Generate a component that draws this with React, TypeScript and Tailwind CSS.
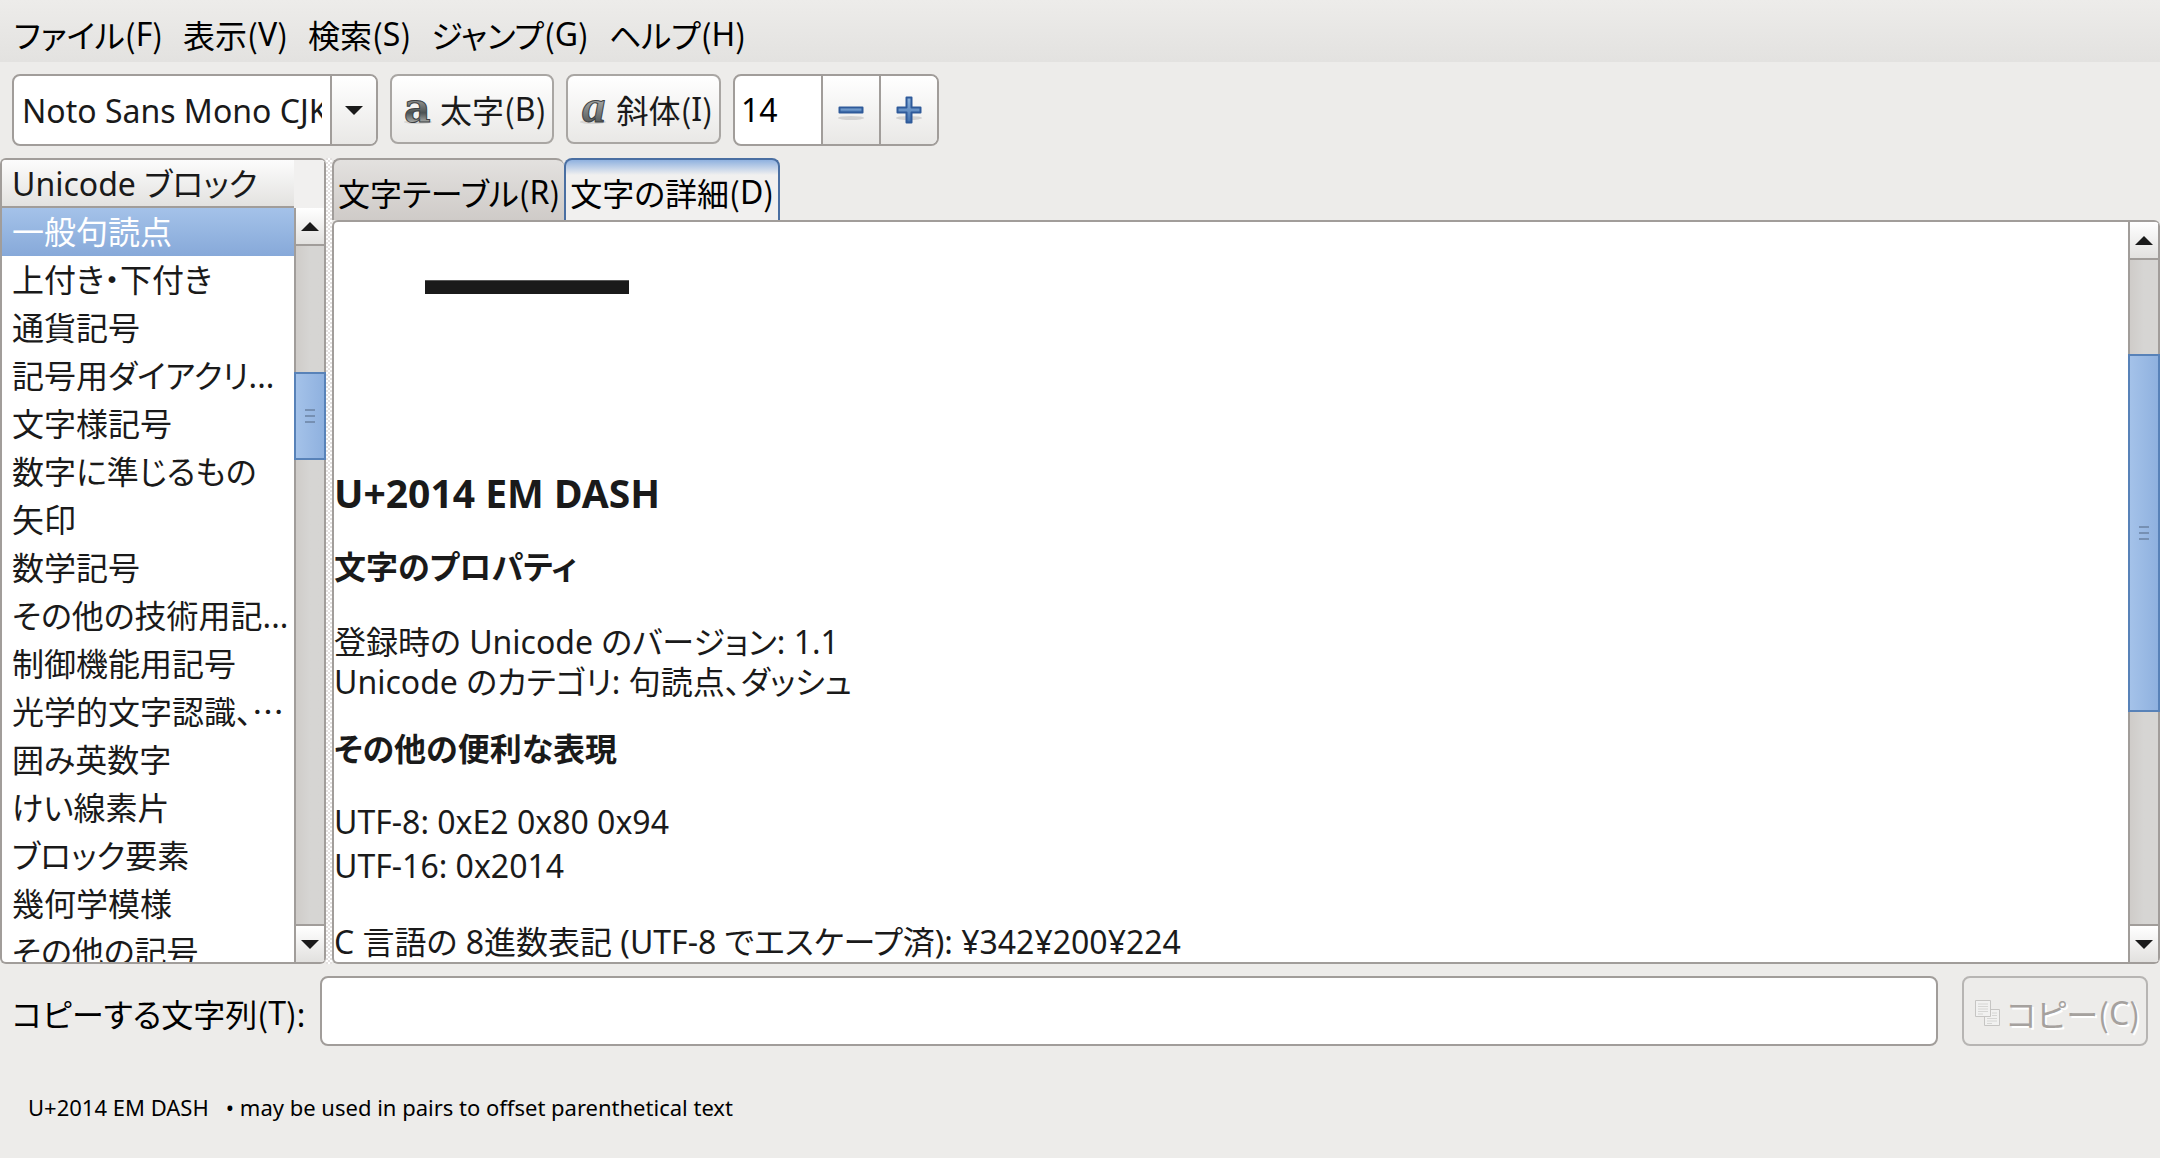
import React, { ReactNode, useState } from 'react';

const menus = [
  { label: 'ファイル', mnemonic: 'F' },
  { label: '表示', mnemonic: 'V' },
  { label: '検索', mnemonic: 'S' },
  { label: 'ジャンプ', mnemonic: 'G' },
  { label: 'ヘルプ', mnemonic: 'H' },
];

const blocks = [
  '一般句読点',
  '上付き・下付き',
  '通貨記号',
  '記号用ダイアクリ...',
  '文字様記号',
  '数字に準じるもの',
  '矢印',
  '数学記号',
  'その他の技術用記...',
  '制御機能用記号',
  '光学的文字認識、⋯',
  '囲み英数字',
  'けい線素片',
  'ブロック要素',
  '幾何学模様',
  'その他の記号',
];

interface LabelProps {
  label: string;
  mnemonic: string;
}

// Label with its access key, e.g. ファイル(F)
const Label: React.FC<LabelProps> = ({ label, mnemonic }) => (
  <span className="whitespace-nowrap [font-family:'Noto_Sans_CJK_JP',sans-serif]">
    {label}(<span className="align-[2px] leading-none [font-family:'Noto_Sans',sans-serif]">{mnemonic}</span>)
  </span>
);

const Arrow: React.FC<{ up?: boolean }> = ({ up }) => (
  <svg width="18" height="9" viewBox="0 0 18 9" aria-hidden="true">
    <path d={up ? 'M0 9 9 0l9 9z' : 'M0 0h18L9 9z'} fill="#1a1a1a" />
  </svg>
);

interface ScrollbarProps {
  before: number;
  size: number;
  after: number;
}

const Scrollbar: React.FC<ScrollbarProps> = ({ before, size, after }) => {
  const track = 'border-x-2 border-[#a19d9a] bg-linear-to-r from-[#cfccc9] to-[#d6d5d3] to-50%';
  return (
    <div className="flex w-8 shrink-0 flex-col">
      <button aria-label="上へ" className="flex h-[38px] shrink-0 items-center justify-center border-x-2 border-b-2 border-[#a19d9a] bg-linear-to-b from-white to-[#e2e1df]">
        <Arrow up />
      </button>
      <div className={`basis-0 ${track}`} style={{ flexGrow: before }} />
      <div
        className="flex basis-0 flex-col items-center justify-center gap-1 border-2 border-[#5882b8] bg-linear-to-r from-[#a4c2e9] to-[#8fb1df]"
        style={{ flexGrow: size }}
      >
        <span className="h-0.5 w-2.5 bg-[#7690b3]" />
        <span className="h-0.5 w-2.5 bg-[#7690b3]" />
        <span className="h-0.5 w-2.5 bg-[#7690b3]" />
      </div>
      <div className={`basis-0 ${track}`} style={{ flexGrow: after }} />
      <button aria-label="下へ" className="flex h-[38px] shrink-0 items-center justify-center border-x-2 border-t-2 border-[#a19d9a] bg-linear-to-b from-white to-[#e2e1df]">
        <Arrow />
      </button>
    </div>
  );
};

const BoldIcon = () => (
  <svg width="28" height="30" viewBox="0 0 28 30" className="overflow-visible" aria-hidden="true">
    <defs>
      <linearGradient id="bold-fill" x1="0" y1="0" x2="0" y2="1">
        <stop offset="0.3" stopColor="#9a9c9a" />
        <stop offset="0.6" stopColor="#4b5254" />
        <stop offset="0.8" stopColor="#a9aba9" />
      </linearGradient>
    </defs>
    <ellipse cx="14" cy="28" rx="14" ry="2" fill="#000" opacity="0.1" />
    <text x="0" y="28" fontFamily="DejaVu Serif" fontWeight="700" fontSize="41" fill="url(#bold-fill)" stroke="#3c4042" strokeWidth="1">a</text>
  </svg>
);

const ItalicIcon = () => (
  <svg width="28" height="30" viewBox="0 0 28 30" className="overflow-visible" aria-hidden="true">
    <defs>
      <linearGradient id="italic-fill" x1="0" y1="0" x2="0" y2="1">
        <stop offset="0.3" stopColor="#b4b6b4" />
        <stop offset="0.8" stopColor="#5a5e5e" />
      </linearGradient>
    </defs>
    <ellipse cx="13" cy="28" rx="13" ry="2" fill="#000" opacity="0.1" />
    <text x="2" y="28" fontFamily="Liberation Serif" fontStyle="italic" fontWeight="700" fontSize="47" fill="url(#italic-fill)" stroke="#3c4042" strokeWidth="1">a</text>
  </svg>
);

const StepIcon: React.FC<{ plus?: boolean }> = ({ plus }) => (
  <svg width="28" height="30" viewBox="0 0 28 30" aria-hidden="true">
    <defs>
      <linearGradient id="step-fill" x1="0" y1="0" x2="0" y2="1">
        <stop offset="0" stopColor="#8fb4dc" />
        <stop offset="1" stopColor="#3f6fae" />
      </linearGradient>
    </defs>
    <ellipse cx="14" cy="23" rx="13" ry="2" fill="#000" opacity="0.12" />
    <path
      d={plus ? 'M11.5 2.500h5v10h9v5h-9v10h-5v-10h-9v-5h9z' : 'M2.500 12.500h23v5h-23z'}
      fill="url(#step-fill)"
      stroke="#2f5a9a"
      strokeWidth="2"
      strokeLinejoin="round"
    />
  </svg>
);

const CopyIcon = () => (
  <svg width="26" height="28" viewBox="0 0 26 28" aria-hidden="true">
    <g fill="#f1f1f0" stroke="#c6c5c3">
      <path d="M10.500 10.500h15v16h-15z" />
      <path d="M1.500 1.500h15v16h-15z" />
    </g>
    <path d="M4 5h10M4 7.500h10M4 10h10M4 12.500h10M4 15h5M18 14h5M18 16.500h5M13 19.500h10M13 22h10M13 24.500h5" stroke="#d6d6d4" />
  </svg>
);

const ToolButton: React.FC<{ children: ReactNode }> = ({ children }) => (
  <button className="flex h-[70px] items-center gap-2 rounded-lg border-2 border-[#a9a6a3] bg-linear-to-b from-white to-[#e9e8e6] pr-1.5 pl-3 text-[#1a1a1a]">
    {children}
  </button>
);

export default function App() {
  const [font, setFont] = useState('Noto Sans Mono CJK JP');
  const [size, setSize] = useState(14);
  const [text, setText] = useState('');
  const [selected, setSelected] = useState(0);

  return (
    <div
      lang="ja"
      className="flex h-screen flex-col overflow-hidden bg-[#edecea] text-[32px] leading-[48px] text-black [font-family:'Noto_Sans','Noto_Sans_CJK_JP',sans-serif] [font-feature-settings:'palt']"
    >
      <nav className="flex h-[62px] shrink-0 items-center gap-5 bg-linear-to-b from-[#edecea] to-[#e3e2e0] px-3.5 pt-2">
        {menus.map((menu) => (
          <button key={menu.mnemonic}>
            <Label {...menu} />
          </button>
        ))}
      </nav>

      <div className="flex shrink-0 items-start gap-3 p-3">
        <div className="flex h-[72px] w-[366px] overflow-hidden rounded-lg border-2 border-[#a19d9a] bg-white">
          <div className="min-w-0 flex-1 px-2">
            <input
              aria-label="フォント"
              className="h-full w-full text-[#1a1a1a] outline-none"
              value={font}
              onChange={(e) => setFont(e.target.value)}
            />
          </div>
          <button aria-label="フォント一覧" className="flex w-[46px] items-center justify-center border-l-2 border-[#a19d9a] bg-linear-to-b from-white to-[#e9e8e6]">
            <Arrow />
          </button>
        </div>
        <ToolButton>
          <BoldIcon />
          <Label label="太字" mnemonic="B" />
        </ToolButton>
        <ToolButton>
          <ItalicIcon />
          <Label label="斜体" mnemonic="I" />
        </ToolButton>
        <div className="flex h-[72px] w-[206px] overflow-hidden rounded-lg border-2 border-[#a19d9a] bg-white">
          <input
            aria-label="サイズ"
            className="min-w-0 flex-1 px-1.5 outline-none"
            value={size}
            onChange={(e) => setSize(Number(e.target.value) || 0)}
          />
          <button aria-label="小さく" onClick={() => setSize(size - 1)} className="flex w-[58px] items-center justify-center border-l-2 border-[#a19d9a] bg-linear-to-b from-white to-[#e9e8e6]">
            <StepIcon />
          </button>
          <button aria-label="大きく" onClick={() => setSize(size + 1)} className="flex w-[58px] items-center justify-center border-l-2 border-[#a19d9a] bg-linear-to-b from-white to-[#e9e8e6]">
            <StepIcon plus />
          </button>
        </div>
      </div>

      <div className="flex min-h-0 flex-1 text-[#1a1a1a]">
        <aside className="flex w-[326px] shrink-0 flex-col overflow-hidden rounded-md border-y-2 border-l-2 border-[#a19d9a] bg-white">
          <div className="flex h-12 shrink-0 border-r-2 border-[#a19d9a] bg-[#f1f0ef]">
            <h2 className="w-[292px] border-b-2 border-[#a19d9a] bg-linear-to-b from-[#fcfcfc] to-[#e3e2e0] pl-2.5 leading-[48px]">Unicode ブロック</h2>
          </div>
          <div className="flex min-h-0 flex-1">
            <ul className="flex-1 overflow-hidden">
              {blocks.map((block, i) => (
                <li key={block}>
                  <button
                    onClick={() => setSelected(i)}
                    className={`block h-12 w-full overflow-hidden pl-2.5 text-left whitespace-nowrap ${
                      i === selected ? 'bg-linear-to-b from-[#a4c2e9] to-[#87a9d9] text-white' : ''
                    }`}
                  >
                    {block}
                  </button>
                </li>
              ))}
            </ul>
            <Scrollbar before={126} size={84} after={464} />
          </div>
        </aside>

        {/* pane handle */}
        <div className="w-1.5 shrink-0 bg-[repeating-conic-gradient(#ffffff_0_25%,#e3e0df_0_50%)] bg-[length:4px_4px]" />

        <main className="flex min-w-0 flex-1 flex-col">
          <div role="tablist" className="flex h-[62px] shrink-0 text-black">
            <button role="tab" aria-selected="false" className="rounded-t-lg border-2 border-r-0 border-b-0 border-[#a19d9a] bg-linear-to-b from-[#e3e1df] to-[#cfcbc8] px-1 pt-1.5">
              <Label label="文字テーブル" mnemonic="R" />
            </button>
            <button role="tab" aria-selected="true" className="rounded-t-lg border-2 border-b-0 border-[#4a6fa2] bg-linear-to-b from-[#8fb1df] to-[#f1f0ef] to-25% px-1 pt-1.5">
              <Label label="文字の詳細" mnemonic="D" />
            </button>
          </div>
          <div className="flex min-h-0 flex-1 overflow-hidden rounded-md border-y-2 border-l-2 border-[#a19d9a] bg-white">
            <article className="min-w-0 flex-1 overflow-hidden">
              <div className="h-60 overflow-hidden pl-[91px] text-[204px] leading-[92px] [font-family:'Liberation_Sans',sans-serif]">—</div>
              <h1 className="text-[39px] leading-[62px] font-bold">U+2014 EM DASH</h1>
              <h2 className="mt-3 leading-[62px] font-bold">文字のプロパティ</h2>
              <div className="mt-6 leading-10">
                <p>登録時の Unicode のバージョン: 1.1</p>
                <p>Unicode のカテゴリ: 句読点、ダッシュ</p>
              </div>
              <h2 className="mt-4 leading-[62px] font-bold">その他の便利な表現</h2>
              <div className="mt-5 leading-11">
                <p>UTF-8: 0xE2 0x80 0x94</p>
                <p>UTF-16: 0x2014</p>
              </div>
              <p className="mt-8 leading-11">C 言語の 8進数表記 (UTF-8 でエスケープ済): ¥342¥200¥224</p>
            </article>
            <Scrollbar before={94} size={354} after={212} />
          </div>
        </main>
      </div>

      <div className="flex shrink-0 items-center p-3">
        <label htmlFor="copy-text" className="w-[308px] shrink-0 pt-1.5">
          <Label label="コピーする文字列" mnemonic="T" />:
        </label>
        <input
          id="copy-text"
          className="h-[70px] min-w-0 flex-1 rounded-lg border-2 border-[#a19d9a] bg-white px-2 outline-none"
          value={text}
          onChange={(e) => setText(e.target.value)}
        />
        <button disabled className="ml-6 flex h-[70px] items-center gap-1.5 rounded-lg border-2 border-[#b7b5b3] pt-1 pr-1.5 pl-2.5 text-[#a5a19e] text-shadow-[2px_2px_0_#ffffff]">
          <CopyIcon />
          <Label label="コピー" mnemonic="C" />
        </button>
      </div>

      <footer className="h-[100px] shrink-0 px-7 pt-6 text-[22px] leading-[50px] whitespace-pre">
        U+2014 EM DASH   • may be used in pairs to offset parenthetical text
      </footer>
    </div>
  );
}
